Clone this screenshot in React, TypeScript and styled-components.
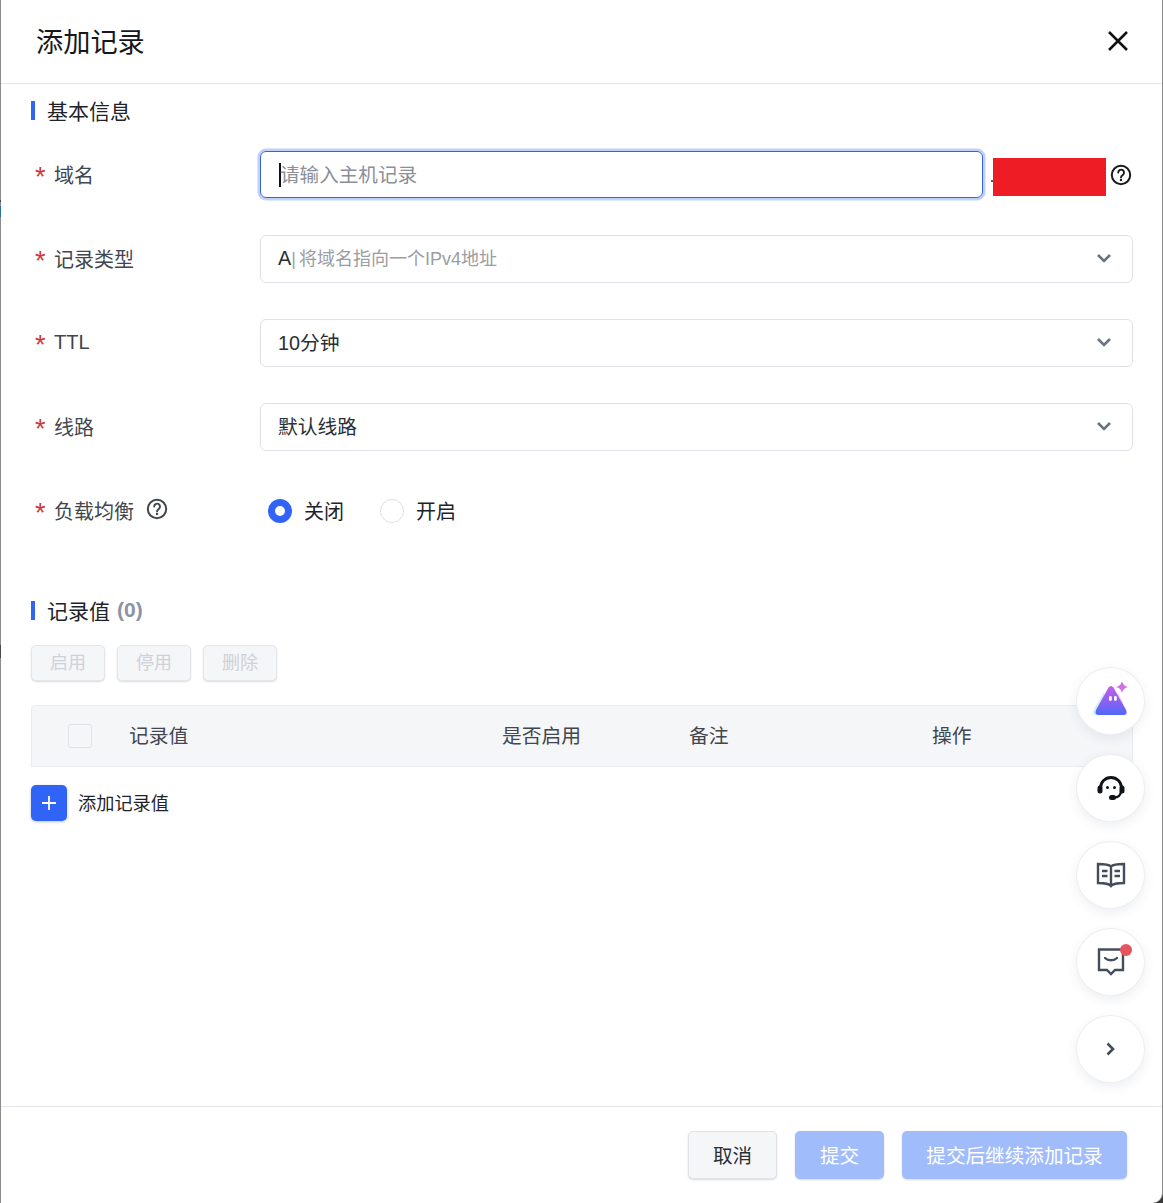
import styled, { createGlobalStyle } from "styled-components";
import type { ReactNode } from "react";

const GlobalStyle = createGlobalStyle`
  html, body {
    margin: 0;
    padding: 0;
    background: #3a3a3a;
  }
  body {
    font-family: "Liberation Sans", "Noto Sans CJK SC", sans-serif;
    color: #1f2329;
  }
  * {
    box-sizing: border-box;
  }
`;

const Modal = styled.div`
  position: relative;
  width: 1163px;
  height: 1203px;
  display: flex;
  flex-direction: column;
  padding-left: 1px;
  background: #fff;
  border-right: 1px solid #8c8c8c;
  border-bottom-right-radius: 10px;
  overflow: hidden;
  &::before {
    content: "";
    position: absolute;
    top: 0;
    bottom: 0;
    left: 0;
    width: 1px;
    background: linear-gradient(
      to bottom,
      #8c8c8c 200px,
      #444 200px 202px,
      #8c8c8c 202px 206px,
      #2f6f9f 206px 217px,
      #8c8c8c 217px 645px,
      #4a4a4a 645px 658px,
      #8c8c8c 658px
    );
  }
`;

const Header = styled.header`
  height: 84px;
  flex: none;
  display: flex;
  align-items: center;
  justify-content: space-between;
  padding: 0 32px 2px 35px;
  border-bottom: 1px solid #e5e6eb;
`;

const Title = styled.h1`
  margin: 0 0 2px;
  font-size: 27.2px;
  font-weight: 400;
  color: #16181d;
`;

const Body = styled.main`
  flex: 1;
  padding: 11px 29px 0 30px;
`;

const SectionTitle = styled.h2<{ $top?: number }>`
  margin: ${(p) => p.$top ?? 0}px 0 0;
  height: 30px;
  display: flex;
  align-items: center;
  gap: 5px;
  font-size: 21px;
  font-weight: 400;
  color: #1f2329;
  &::before {
    content: "";
    width: 4px;
    height: 19px;
    margin-right: 7px;
    background: #2f64f6;
  }
`;

const Count = styled.span`
  margin-left: 2px;
  color: #8a94a6;
  font-weight: 700;
`;

const Form = styled.div`
  margin-top: 26px;
  display: flex;
  flex-direction: column;
  gap: 36px;
`;

const Row = styled.div`
  height: 48px;
  display: flex;
  align-items: center;
`;

const Label = styled.label`
  width: 229px;
  flex: none;
  display: flex;
  align-items: center;
  padding: 0 0 2px 5px;
  font-size: 20px;
  color: #41464f;
`;

const Star = styled.span`
  width: 18px;
  height: 20px;
  color: #cf3b37;
  font-size: 27px;
  line-height: 27px;
  margin-left: -1px;
  margin-right: 1px;
`;

const FocusInput = styled.div`
  width: 723px;
  height: 47px;
  flex: none;
  align-self: flex-start;
  display: flex;
  align-items: center;
  padding: 0 0 2px 18px;
  border: 1.5px solid #3563e0;
  border-radius: 6px;
  box-shadow: 0 0 0 2.5px #bfd0fb;
  font-size: 19.6px;
  color: #8b8f96;
`;

const Caret = styled.span`
  width: 2px;
  height: 24px;
  margin: 2px -1px 0 0;
  background: #111;
`;

const Select = styled.div`
  width: 873px;
  height: 48px;
  display: flex;
  align-items: center;
  justify-content: space-between;
  padding: 0 20px 4px 17px;
  border: 1px solid #dfe1e8;
  border-radius: 6px;
  font-size: 19.8px;
  color: #2a2e35;
`;

const Hint = styled.span`
  font-size: 18px;
  word-spacing: -2px;
  color: #9a9da3;
`;

const Masked = styled.div`
  position: relative;
  width: 113px;
  height: 38px;
  margin: 4px 3px 0 10px;
  flex: none;
  background: #ee1c25;
  &::before {
    content: "";
    position: absolute;
    left: -2px;
    top: 22px;
    width: 2px;
    height: 2px;
    background: #6b5a3a;
  }
`;

const Radios = styled.div`
  display: flex;
  align-items: center;
  padding-left: 8px;
`;

const RadioItem = styled.div`
  display: flex;
  align-items: center;
  gap: 12px;
  margin-right: 36px;
  font-size: 20px;
  color: #1f2329;
`;

const RadioText = styled.span`
  padding-bottom: 2px;
`;

const RadioDot = styled.span<{ $on?: boolean }>`
  width: 24px;
  height: 24px;
  border-radius: 50%;
  background: #fff;
  border: ${(p) => (p.$on ? "7px solid #2f64f6" : "1px solid #dfe1e8")};
`;

const Toolbar = styled.div`
  margin-top: 20px;
  display: flex;
  gap: 12px;
`;

const GhostButton = styled.button`
  width: 74px;
  height: 36px;
  padding: 0 0 5px;
  border: 1px solid #e4e6ec;
  border-radius: 5px;
  background: #f5f6f8;
  box-shadow: 0 1px 2px rgba(0, 0, 0, 0.14);
  font: inherit;
  font-size: 18px;
  color: #ced1d7;
`;

const TableHead = styled.div`
  margin-top: 24px;
  width: 1102px;
  height: 62px;
  display: grid;
  grid-template-columns: 61px 373px 187px 243px 1fr;
  align-items: center;
  padding-left: 36px;
  background: #f5f6f8;
  border: 1px solid #e9ebef;
  border-radius: 4px 4px 0 0;
  font-size: 19.8px;
  color: #41464f;
`;

const HeadCell = styled.span`
  padding-bottom: 4px;
`;

const CheckBox = styled.span`
  width: 24px;
  height: 24px;
  background: #f5f6f8;
  border: 1px solid #dfe1e8;
  border-radius: 3px;
`;

const AddRow = styled.div`
  margin-top: 18px;
  display: flex;
  align-items: center;
  gap: 11px;
  font-size: 18.2px;
  color: #1f2329;
`;

const AddLabel = styled.span`
  padding-bottom: 2px;
`;

const AddButton = styled.button`
  width: 36px;
  height: 36px;
  padding: 0;
  display: flex;
  align-items: center;
  justify-content: center;
  border: none;
  border-radius: 5px;
  background: #2f64f6;
  box-shadow: 0 1px 3px rgba(0, 0, 0, 0.25);
`;

const Footer = styled.footer`
  height: 97px;
  flex: none;
  display: flex;
  justify-content: flex-end;
  gap: 18px;
  padding: 24px 35px 0 0;
  border-top: 1px solid #e5e6eb;
`;

const FooterButton = styled.button<{ $primary?: boolean; $width: number }>`
  width: ${(p) => p.$width}px;
  height: 48px;
  padding: 0 0 2px;
  border: ${(p) => (p.$primary ? "none" : "1px solid #e1e3e9")};
  border-radius: 5px;
  background: ${(p) => (p.$primary ? "#a0bcfa" : "#f5f6f8")};
  box-shadow: 0 1px 2px rgba(0, 0, 0, 0.15);
  font: inherit;
  font-size: 19.6px;
  color: ${(p) => (p.$primary ? "#fff" : "#2a2e35")};
`;

const FloatStack = styled.div`
  position: absolute;
  top: 667px;
  left: 1076px;
  display: flex;
  flex-direction: column;
  gap: 19px;
`;

const FloatButton = styled.div`
  position: relative;
  width: 69px;
  height: 68px;
  display: flex;
  align-items: center;
  justify-content: center;
  border: 1px solid #eceef4;
  border-radius: 50%;
  background: #fff;
  box-shadow: 0 4px 12px rgba(40, 50, 80, 0.08);
`;

const RedDot = styled.span`
  position: absolute;
  top: 15px;
  right: 12px;
  width: 12px;
  height: 12px;
  border-radius: 50%;
  background: #e5555f;
`;

const HelpIcon = ({ color = "#1a1a1a", lift = 0 }: { color?: string; lift?: number }) => (
  <svg width="22" height="22" viewBox="0 0 22 22" fill="none" style={{ marginBottom: lift, marginLeft: 1 }}>
    <circle cx="11" cy="11" r="9.2" stroke={color} strokeWidth="2" />
    <path
      d="M8.2 8.6a2.9 2.9 0 1 1 4.6 2.3c-1.1.8-1.8 1.3-1.8 2.500"
      stroke={color}
      strokeWidth="1.9"
      strokeLinecap="round"
    />
    <circle cx="11" cy="16" r="1.2" fill={color} />
  </svg>
);

const Chevron = () => (
  <svg width="16" height="12" viewBox="0 0 16 12" fill="none" style={{ marginTop: 2 }}>
    <path d="M2 3l6 6 6-6" stroke="#6b7280" strokeWidth="2.6" />
  </svg>
);

const FieldLabel = ({ children }: { children: ReactNode }) => (
  <Label>
    <Star>*</Star>
    {children}
  </Label>
);

const AiIcon = () => (
  <svg width="42" height="42" viewBox="0 0 42 42" fill="none" style={{ marginTop: -4 }}>
    <defs>
      <linearGradient id="peak" gradientUnits="userSpaceOnUse" x1="21" y1="8" x2="21" y2="37">
        <stop offset="0" stopColor="#c25fe8" />
        <stop offset="0.5" stopColor="#8f60f2" />
        <stop offset="1" stopColor="#4f69f7" />
      </linearGradient>
    </defs>
    <path d="M14 14L3 33q-1.500 4 3 4h12z" fill="#cdeffb" />
    <path d="M28 14l9 19q1.500 4-3 4H24z" fill="#f7d8fa" />
    <path d="M18.500 9.500q2.500-3 5 0L36 32q2 5-3 5H9q-5 0-3-5z" fill="url(#peak)" />
    <rect x="19" y="18" width="2.800" height="5" rx="1.400" fill="#fff" />
    <rect x="24" y="18" width="2.800" height="5" rx="1.400" fill="#fff" />
    <path d="M32 3q1 5 6 6-5 1-6 6-1-5-6-6 5-1 6-6z" fill="#d070e8" />
  </svg>
);

const HeadsetIcon = () => (
  <svg width="30" height="30" viewBox="0 0 30 30" fill="none">
    <path d="M4.500 15a10.500 10.500 0 0 1 21 0" stroke="#10131a" strokeWidth="2.800" />
    <path d="M25 18c0 4-3 6.500-7 6.500" stroke="#10131a" strokeWidth="2.400" />
    <rect x="1.500" y="12.500" width="5" height="8" rx="2.500" fill="#10131a" />
    <rect x="23.500" y="12.500" width="5" height="8" rx="2.500" fill="#10131a" />
    <rect x="13" y="22" width="7" height="5" rx="2.500" fill="#10131a" />
    <circle cx="11.500" cy="14.500" r="1.500" fill="#10131a" />
    <circle cx="18.500" cy="14.500" r="1.500" fill="#10131a" />
  </svg>
);

const BookIcon = () => (
  <svg width="30" height="26" viewBox="0 0 30 26" fill="none" stroke="#454d5c" strokeWidth="2.400">
    <path d="M15 4.500C13 2.500 10 2 2 2v19c8 0 11 .5 13 3 2-2.500 5-3 13-3V2c-8 0-11 .5-13 2.500zM15 4.500V24" />
    <path d="M6 9h5.500M6 14h5.500M18.500 9H24M18.500 14H24" />
  </svg>
);

const MessageIcon = () => (
  <svg width="28" height="28" viewBox="0 0 28 28" fill="none" stroke="#454d5c" strokeWidth="2.400">
    <path d="M2 1.500h24V22h-8l-4 4-4-4H2z" />
    <path d="M8 10c3 3 9 3 12 0" strokeLinecap="round" />
  </svg>
);

const ArrowIcon = () => (
  <svg width="14" height="16" viewBox="0 0 14 16" fill="none">
    <path d="M3.500 2.500L9 8l-5.500 5.500" stroke="#454d5c" strokeWidth="2.600" />
  </svg>
);

export default function App() {
  return (
    <>
      <GlobalStyle />
      <Modal>
        <Header>
          <Title>添加记录</Title>
          <svg width="24" height="24" viewBox="0 0 24 24" fill="none">
            <path d="M3 3l18 18M21 3L3 21" stroke="#111" strokeWidth="2.500" />
          </svg>
        </Header>
        <Body>
          <SectionTitle>基本信息</SectionTitle>
          <Form>
            <Row>
              <FieldLabel>域名</FieldLabel>
              <FocusInput>
                <Caret />
                请输入主机记录
              </FocusInput>
              <Masked />
              <HelpIcon />
            </Row>
            <Row>
              <FieldLabel>记录类型</FieldLabel>
              <Select>
                <span>
                  A<Hint>| 将域名指向一个IPv4地址</Hint>
                </span>
                <Chevron />
              </Select>
            </Row>
            <Row>
              <FieldLabel>TTL</FieldLabel>
              <Select>
                10分钟
                <Chevron />
              </Select>
            </Row>
            <Row>
              <FieldLabel>线路</FieldLabel>
              <Select>
                默认线路
                <Chevron />
              </Select>
            </Row>
            <Row>
              <FieldLabel>
                负载均衡&nbsp;&nbsp;
                <HelpIcon color="#41464f" lift={2} />
              </FieldLabel>
              <Radios>
                <RadioItem>
                  <RadioDot $on />
                  <RadioText>关闭</RadioText>
                </RadioItem>
                <RadioItem>
                  <RadioDot />
                  <RadioText>开启</RadioText>
                </RadioItem>
              </Radios>
            </Row>
          </Form>
          <SectionTitle $top={60}>
            记录值 <Count>(0)</Count>
          </SectionTitle>
          <Toolbar>
            <GhostButton>启用</GhostButton>
            <GhostButton>停用</GhostButton>
            <GhostButton>删除</GhostButton>
          </Toolbar>
          <TableHead>
            <CheckBox />
            <HeadCell>记录值</HeadCell>
            <HeadCell>是否启用</HeadCell>
            <HeadCell>备注</HeadCell>
            <HeadCell>操作</HeadCell>
          </TableHead>
          <AddRow>
            <AddButton>
              <svg width="16" height="16" viewBox="0 0 16 16" fill="none">
                <path d="M8 1v14M1 8h14" stroke="#fff" strokeWidth="1.800" />
              </svg>
            </AddButton>
            <AddLabel>添加记录值</AddLabel>
          </AddRow>
        </Body>
        <Footer>
          <FooterButton $width={89}>取消</FooterButton>
          <FooterButton $primary $width={89}>
            提交
          </FooterButton>
          <FooterButton $primary $width={225}>
            提交后继续添加记录
          </FooterButton>
        </Footer>
        <FloatStack>
          <FloatButton>
            <AiIcon />
          </FloatButton>
          <FloatButton>
            <HeadsetIcon />
          </FloatButton>
          <FloatButton>
            <BookIcon />
          </FloatButton>
          <FloatButton>
            <MessageIcon />
            <RedDot />
          </FloatButton>
          <FloatButton>
            <ArrowIcon />
          </FloatButton>
        </FloatStack>
      </Modal>
    </>
  );
}
